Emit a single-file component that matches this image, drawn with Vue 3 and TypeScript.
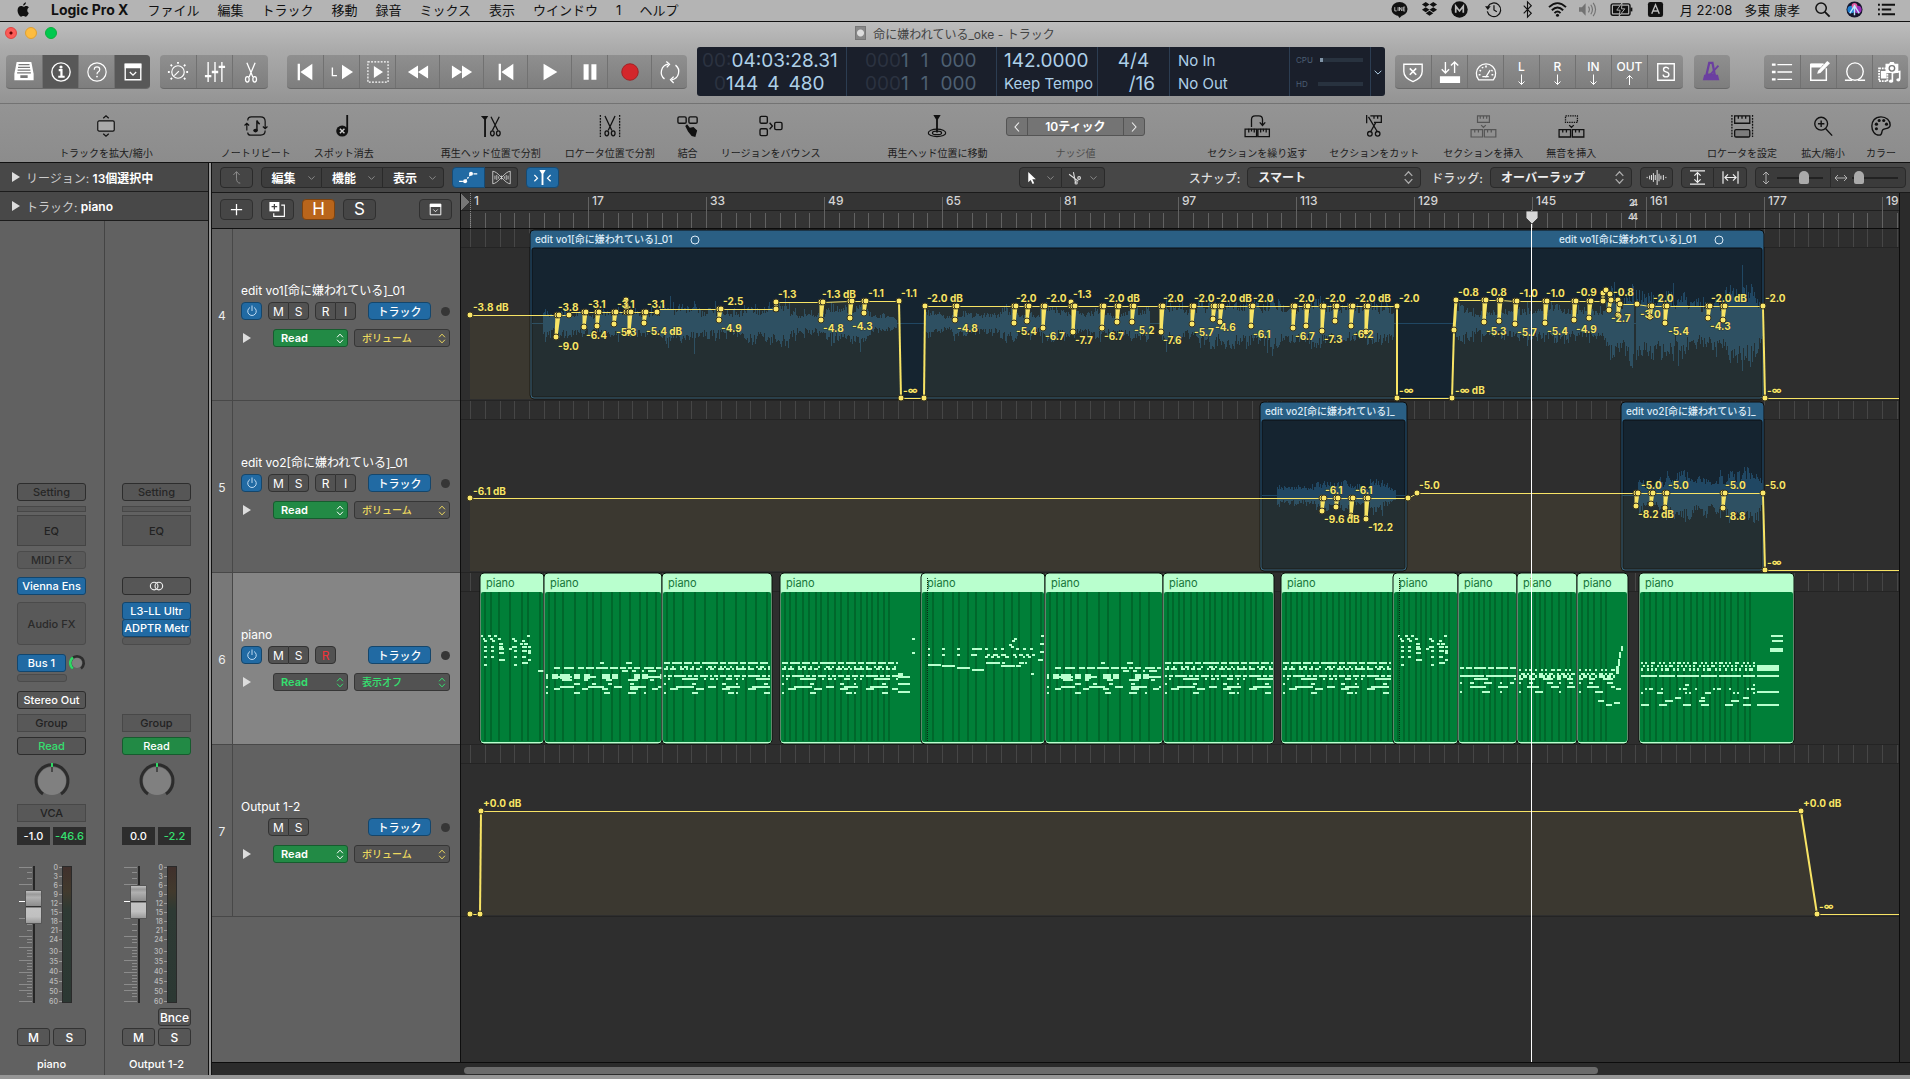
<script setup lang="ts">
import { ref } from 'vue'

type Pt = [number, number]
type Label = [number, number, string]

const icons: Record<string, string> = {
  apple: '<path fill="currentColor" d="M14.6 12.6c-.9 2.500-2.300 4-3.400 4-1 0-1.300-.6-2.400-.6s-1.500.6-2.400.6C4.800 16.600 2.700 13 2.700 9.900c0-3 1.900-4.500 3.700-4.500 1.100 0 2 .7 2.600.7.700 0 1.700-.8 3-.8.700 0 2 .3 2.700 1.500-2.400 1.500-2 4.800-.1 5.800zM11.600 1.200c.1 1.900-1.300 3.500-3 3.600-.2-1.700 1.400-3.400 3-3.600z"/>',
  line: '<ellipse cx="9" cy="8.500" rx="8.500" ry="7.500" fill="currentColor"/><path d="M7 15l2 3 3-3z" fill="currentColor"/><path d="M4 6.500v4h2M7.500 6.500v4M9 10.500v-4l2.500 4v-4M15 6.500h-2v4h2M13 8.500h2" fill="none" stroke="#bbb" stroke-width="1"/>',
  dropbox: '<path fill="currentColor" d="M5 1l4 2.700-4 2.700L1 3.700zM13 1l4 2.700-4 2.700-4-2.700zM5 6.600l4 2.700L5 12 1 9.300zM13 6.600l4 2.700-4 2.700-4-2.700zM5 12.900l4-2.600 4 2.600-4 2.700z"/>',
  m: '<circle cx="9" cy="9" r="8.700" fill="currentColor"/><path d="M5 12.500v-7l4 5 4-5v7" fill="none" stroke="#bbb" stroke-width="1.800"/>',
  time: '<g fill="none" stroke="currentColor" stroke-width="1.300"><path d="M3 6a7.200 7.200 0 1 1-.6 5"/><path d="M9.500 4.500V9.500l3 2"/></g><path d="M0 5.500h6L3 9.500z" fill="currentColor"/>',
  bt: '<path d="M5 5l8 8-4 4V1l4 4-8 8" fill="none" stroke="currentColor" stroke-width="1.200"/>',
  wifi: '<g fill="none" stroke="currentColor" stroke-width="2"><path d="M0 6.500q9-8.500 18 0M3 9.800q6-6 12 0M5.800 12.800q3.200-3.200 6.400 0"/></g><circle cx="9" cy="15" r="1.600" fill="currentColor"/>',
  vol: '<g opacity=".4"><path d="M0 6.500h3l4-4v13l-4-4H0z" fill="currentColor"/><path d="M10 6q2 3 0 6M12.500 4q3.500 5 0 10M15 2q5 7 0 14" fill="none" stroke="currentColor" stroke-width="1.200"/></g>',
  bat: '<rect x="-2" y="3" width="20" height="12" rx="2" fill="none" stroke="currentColor" stroke-width="1.500"/><rect x="0" y="5" width="16" height="8" fill="currentColor"/><path d="M19.500 7v4" stroke="currentColor" stroke-width="2"/><path d="M9.500 2L4 9.700h3.500L6.500 16l6-7.700H9z" fill="currentColor" stroke="#b4b4b4"/>',
  abc: '<rect x="1" y="1" width="16" height="16" rx="2.500" fill="currentColor"/><path d="M5 13.500L9 4l4 9.500M6.500 10.500h5" fill="none" stroke="#bbb" stroke-width="1.500"/>',
  search: '<circle cx="7.500" cy="7.500" r="5.500" fill="none" stroke="currentColor" stroke-width="1.600"/><path d="M11.500 11.500l5 5" stroke="currentColor" stroke-width="2"/>',
  siri: '<circle cx="9" cy="9" r="8.500" fill="#15152c"/><circle cx="5.500" cy="9" r="4" fill="#1f7fd0"/><circle cx="12.500" cy="9" r="4" fill="#9b2fb8"/><circle cx="9" cy="5" r="3" fill="#e0569d"/><path d="M4 13l5-8 5 8M9 4v11" stroke="#bfe8ff" fill="none" stroke-width="1.500"/>',
  list: '<path d="M4 4h14M4 9h10M4 14h14" stroke="currentColor" stroke-width="2"/><path d="M0 4h2M0 9h2M0 14h2" stroke="currentColor" stroke-width="2"/>',
  library: '<path d="M4 1h16l2.500 13v7h-21v-7z" fill="#fff"/><path d="M6 4h12M5.500 7h13M5 10h14M4.500 13h15" stroke="#777" stroke-width="1.500"/><path d="M8 15.500h8v3H8z" fill="#777"/>',
  info: '<g fill="none" stroke="#fff" stroke-width="1.500"><circle cx="12" cy="12" r="10"/><path d="M9.500 10h3v7M9 17.200h7" stroke-width="2.400"/></g><circle cx="12" cy="6.500" r="1.700" fill="#fff"/>',
  help: '<g fill="none" stroke="#fff" stroke-width="1.300"><circle cx="12" cy="12" r="10"/><path d="M9 9.500q0-3 3-3t3 2.800q0 1.700-1.800 2.700Q12 12.700 12 14.500"/></g><circle cx="12" cy="17" r="1" fill="#fff"/>',
  drop: '<path d="M3.500 3.500h17v17h-17z" fill="none" stroke="#fff" stroke-width="1.500"/><path d="M3 3h18v5H3z" fill="#fff"/><path d="M8.500 12l3.500 3.500 3.500-3.500" fill="none" stroke="#fff" stroke-width="1.300"/>',
  knob: '<g stroke="#fff" fill="none"><circle cx="12" cy="12" r="6.800" stroke-width="1.300"/><path d="M8 16l5-5" stroke-width="1.300"/><path d="M12 1v2M1 12h2M21 12h2M4 4l1.500 1.500M20 4l-1.500 1.500M4 20l1.500-1.500M20 20l-1.500-1.500" stroke-width="2"/></g>',
  mixer: '<g stroke="#fff" fill="none" stroke-width="1.500"><path d="M4.500 1v22M12 1v22M19.500 1v22"/><path d="M1 16.500h7M8.500 12h7M16 6.500h7" stroke-width="2.500"/></g>',
  scissors: '<g stroke="currentColor" fill="none" stroke-width="1.400"><path d="M7.500 2l6.500 15.500M16.500 2L10 17.500"/><ellipse cx="8" cy="20" rx="2" ry="3"/><ellipse cx="16" cy="20" rx="2" ry="3"/></g>',
  start: '<path d="M4 3h2.500v18H4zM20 3v18L7 12z" fill="#fff"/>',
  lplay: '<path d="M1.500 7v9h5" stroke="#fff" stroke-width="1.500" fill="none"/><path d="M12 4v16l12-8z" fill="#fff"/>',
  box: '<path d="M1 1h22v22H1z" fill="none" stroke="#fff" stroke-width="1.300" stroke-dasharray="2 1.500"/><path d="M7.500 5.500v13l10-6.500z" fill="#fff"/>',
  rew: '<path d="M12 5v14L1 12zM23 5v14l-11-7z" fill="#fff"/>',
  fwd: '<path d="M1 5v14l11-7zM12 5v14l11-7z" fill="#fff"/>',
  play: '<path d="M5 3v18l15-9z" fill="#fff"/>',
  pause: '<path d="M5 3.500h5.500v17H5zM13.500 3.500H19v17h-5.500z" fill="#fff"/>',
  rec: '<circle cx="12" cy="12" r="9" fill="#d3262b" stroke="#a01c20"/>',
  cycle: '<g fill="none" stroke="#fff" stroke-width="1.400"><path d="M6 19.500A9 9 0 0 1 10 3.500M18 4.500A9 9 0 0 1 14 20.500"/><path d="M8 .5l3.500 3L8.500 7M16 17l-3.500 3.500L16 24"/></g>',
  shield: '<g fill="none" stroke="#fff" stroke-width="1.500"><path d="M2 3.500h20v8q0 7-10 11-10-4-10-11z"/><path d="M8.500 8l7 7M15.500 8l-7 7" stroke-width="1.800"/></g>',
  replace: '<g fill="none" stroke="#fff" stroke-width="1.500"><path d="M7 1v12M3 9l4 4 4-4M17 13V1M13 5l4-4 4 4"/></g><path d="M1 16.500h22V24H1z" fill="#fff"/>',
  gauge: '<g fill="none" stroke="#fff" stroke-width="1.400"><path d="M4 20.500a10.500 10.500 0 1 1 16 0z"/><path d="M11.500 18l5-8M8 17h7"/><path d="M12 5v2M5 10l1.500 1M4 15h2M19 10l-1 1M18 15h2M8 6.500l.5 1.500" stroke-width="1.800"/></g>',
  down: '<path d="M12 1v20M6 15l6 6 6-6" fill="none" stroke="#fff" stroke-width="2"/>',
  up: '<path d="M12 22V3M6 9l6-6 6 6" fill="none" stroke="#fff" stroke-width="2"/>',
  solo: '<path d="M3 3h18v18H3z" fill="none" stroke="#fff" stroke-width="1.500"/><path d="M15 9q-.5-2.200-3-2.200-2.700 0-2.700 2.400 0 2 2.700 2.600 3.200.7 3.200 2.900 0 2.600-3.200 2.600-2.900 0-3.200-2.500" fill="none" stroke="#fff" stroke-width="1.500"/>',
  metro: '<path d="M9 2h3.500l2.500 13H6z" fill="none" stroke="#6b3fa0" stroke-width="2.500"/><path d="M3.500 15h15l1.500 6H2z" fill="#6b3fa0"/><path d="M10 15l9-10" stroke="#6b3fa0" stroke-width="2"/>',
  events: '<path d="M7 4h16M7 12h16M7 20h16" stroke="#fff" stroke-width="1.500"/><path d="M1 4h4M1 12h4M1 20h4" stroke="#fff" stroke-width="2.500"/>',
  note: '<path d="M3 3.500h14M20 8v13H3V3" fill="none" stroke="#fff" stroke-width="1.600"/><path d="M3 3h14l-3 4H3z" fill="#fff"/><path d="M10 14l1-3.500L21 0l3 2.500-10.500 10.500z" fill="#fff"/>',
  loop: '<g fill="none" stroke="#fff" stroke-width="1.500"><ellipse cx="12" cy="11.500" rx="9" ry="9.500"/><path d="M1 21h8M15 21h8"/></g>',
  media: '<path d="M-1 8h9v14h-9z" fill="none" stroke="#fff" stroke-width="2" stroke-dasharray="2 1"/><path d="M1 11h6v8H1z" fill="#fff"/><path d="M6 3h4l1-2h4l1 2h4v10H6z" fill="#fff"/><circle cx="13" cy="8" r="3" fill="none" stroke="#777" stroke-width="1.500"/><path d="M13.500 22v-9l8-1.500V20" fill="none" stroke="#fff" stroke-width="1.800"/><ellipse cx="12" cy="22" rx="2.200" ry="1.800" fill="#fff"/><ellipse cx="20" cy="20.500" rx="2.200" ry="1.800" fill="#fff"/>',
  tZoom: '<g fill="none" stroke="#111" stroke-width="1.300"><rect x="3" y="6.500" width="18" height="11" rx="1.500" fill="#aaa"/><path d="M9 3.500L12 .8l3 2.700M9 20.500l3 2.700 3-2.700"/></g>',
  tRepeat: '<g fill="none" stroke="#111" stroke-width="1.300"><path d="M2 17V9M-.5 11.500L2 9l2.500 2.500M22 7v8M19.500 12.500L22 15l2.500-2.500M3 19q0 3 3 3h12M3 6q0-4 4-4h10q5 0 5 5M22 17q0 5-5 5"/><path d="M13 17V6q.5 2 3 4" stroke-width="1.600"/></g><ellipse cx="11.500" cy="17" rx="2.500" ry="2" fill="#111"/>',
  tSpot: '<ellipse cx="10" cy="17.500" rx="6.500" ry="6" fill="#111"/><path d="M15.500 17V0" stroke="#111" stroke-width="2"/><path d="M7.500 15l5 5M12.500 15l-5 5" stroke="#ccc" stroke-width="1.600"/>',
  tSplit: '<path d="M1 1h8L6.500 5v19h-2V5z" fill="#111"/><g stroke="#111" fill="none" stroke-width="1.400"><path d="M12 2l7.500 15M21 2l-7.500 15"/><ellipse cx="13.500" cy="20" rx="2" ry="2.700"/><ellipse cx="20" cy="20" rx="2" ry="2.700"/></g>',
  tLoc: '<g stroke="#111" fill="none" stroke-width="1.400"><path d="M1.500 0v24M22.500 0v24" stroke-dasharray="2 1.200"/><path d="M6.500 1l7.500 16M17.500 1L10 17"/><ellipse cx="8.500" cy="20" rx="2" ry="2.700"/><ellipse cx="15.500" cy="20" rx="2" ry="2.700"/></g>',
  tJoin: '<g stroke="#111" fill="none" stroke-width="1.500"><rect x="1" y="2" width="9" height="7" rx="1.500"/><rect x="13" y="2" width="9" height="7" rx="1.500"/></g><path d="M9 12l2-2 3 4 4-1 4 4-2 7-4-1-4-5z" fill="#111"/>',
  tBounce: '<g stroke="#111" fill="none" stroke-width="1.500"><rect x="0" y="1.500" width="8" height="7.500" rx="1.500"/><rect x="0" y="15" width="8" height="7.500" rx="1.500"/><rect x="16" y="8" width="8" height="8" rx="1.500"/><path d="M10.500 8.500l3 3.500-3 3.500"/></g>',
  tMove: '<path d="M8 0h8l-3 5v14h-2V5z" fill="#111"/><g stroke="#111" fill="none" stroke-width="1.300"><ellipse cx="12" cy="19.500" rx="9.500" ry="4"/><ellipse cx="12" cy="19.500" rx="5" ry="2"/></g>',
  tLoop: '<g stroke="#111" fill="none" stroke-width="1.400"><path d="M6 13V5q0-4 4-4h4q4 0 4 4v6M15 8l3 3.500L21 8"/><path d="M-1 15.500h12.500v8H-1zM13 15.500h12.500v8H13z"/><path d="M3 15v4M6 15v3M9 15v4M16 15v4M19 15v3M22 15v4"/></g>',
  tCut: '<g stroke="#111" fill="none" stroke-width="1.400"><path d="M4 0v9M8 1h12v7h-8M12 1v3M16 1v3"/><path d="M6 2l9.500 16M14 8L8.500 18"/><circle cx="7.500" cy="20.500" r="2.500"/><circle cx="16" cy="20.500" r="2.500"/></g>',
  tIns: '<g stroke="#555" fill="none" stroke-width="1.300"><path d="M6 1h13v7H6zM9 1v3M12.500 1v3M16 1v3M10 11l2.500 2.500L15 11M-1 16h12.500v8H-1zM13.500 16H26v8H13.500zM3 16v3M7 16v3M17 16v3M21 16v3"/></g>',
  tSil: '<g stroke="#111" fill="none" stroke-width="1.400"><path d="M6 1h13v7H6z" stroke-dasharray="1.500 1"/><path d="M10 11l2.500 2.500L15 11M-1 16h12.500v8H-1zM13.500 16H26v8H13.500zM3 16v3M7 16v3M17 16v3M21 16v3"/></g>',
  tSet: '<g stroke="#111" fill="none" stroke-width="1.400"><path d="M1 0v24M23.500 0v24" stroke-dasharray="2 1.200"/><path d="M4 1h16.500v8H4zM8 1v3M12 1v3M16 1v3"/><rect x="4" y="16" width="16.500" height="8" rx="1.500" fill="#7c7c7c"/></g>',
  tMag: '<g stroke="#111" fill="none" stroke-width="1.500"><circle cx="10" cy="9.500" r="7"/><path d="M6.500 9.500h7M10 6v7M15 15l7 7.500" /></g>',
  tPal: '<path d="M12 2C5 2 2 7 2 12s3 10 8 10c4 0 2-4 4-6s8 0 8-5-4-9-10-9z" fill="none" stroke="#111" stroke-width="1.500"/><g fill="#111"><circle cx="7" cy="10" r="1.800"/><circle cx="10" cy="6" r="1.700"/><circle cx="15" cy="6" r="1.700"/><circle cx="18" cy="10" r="1.700"/><circle cx="7" cy="15" r="1.700"/></g>',
  back: '<path d="M18 21q-6 0-6-8V3M7 8l5-5.500L17 8" fill="none" stroke="#8a8a8a" stroke-width="1.600"/>',
  auto: '<g fill="#fff"><path d="M-3 17h6v2h-6zM20 5h6v2h-6z"/><circle cx="6.500" cy="18" r="3.200"/><circle cx="16" cy="6" r="3.200"/></g><path d="M7 17.500l9-11" stroke="#fff" stroke-width="2" stroke-dasharray="3 2"/>',
  flex: '<g fill="none" stroke="#ddd" stroke-width="1.300"><path d="M-2 2q5 0 14 10 9 10 14 10V2q-5 0-14 10-9 10-14 10z"/><path d="M1.500 9v6M4.500 8v8M7.500 10v4M16.500 10v4M19.500 8v8M22.500 9v6M12 9v6"/></g>',
  catch: '<path d="M7 0h10l-3.500 6v18h-3V6z" fill="#fff"/><path d="M-1 8l5 5-5 5M25 8l-5 5 5 5" fill="none" stroke="#fff" stroke-width="1.900"/>',
  chev: '<path d="M4 9l8 8 8-8" fill="none" stroke="currentColor" stroke-width="2.200"/>',
  left: '<path d="M16 3L8 12l8 9" fill="none" stroke="#eee" stroke-width="2.200"/>',
  right: '<path d="M8 3l8 9-8 9" fill="none" stroke="#eee" stroke-width="2.200"/>',
  updown: '<path d="M5 9l7-7.500L19 9M5 15l7 7.500 7-7.500" fill="none" stroke="currentColor" stroke-width="2.400"/>',
  plus: '<path d="M12 3v18M3 12h18" stroke="#fff" stroke-width="2"/>',
  dup: '<path d="M-1 0h16v15H-1z" fill="#fff"/><path d="M7 3v9M2.500 7.500h9" stroke="#444" stroke-width="2"/><path d="M18 5h5v18H6v-5" fill="none" stroke="#fff" stroke-width="1.800"/>',
  pointer: '<path d="M6 1v19l4.500-4.500L14 23l3-1.500-3.500-7H20z" fill="#fff"/>',
  cut2: '<g fill="none" stroke="#ddd" stroke-width="2"><path d="M2 5l17 13M10 1l4 20"/><circle cx="20.500" cy="12" r="2.500"/><circle cx="15" cy="21" r="2"/></g>',
  wave: '<path d="M-3 11v2M1 9v6M4 8v8M7 5v14M10 8v8M13 0v24M16 6v12M19 9v6M23 8v8M27 11v2" stroke="#eee" stroke-width="1.500"/>',
  vfit: '<path d="M0 1.500h24M0 22.500h24M12 4v16M7 9l5-5 5 5M7 15l5 5 5-5" fill="none" stroke="#eee" stroke-width="1.900"/>',
  hfit: '<path d="M0 2v20M24 2v20M3 12h18M8 7l-5 5 5 5M16 7l5 5-5 5" fill="none" stroke="#eee" stroke-width="1.900"/>',
  vzoom: '<path d="M12 0v24M6 6l6-6 6 6M6 18l6 6 6-6" fill="none" stroke="#bbb" stroke-width="1.800"/>',
  hzoom: '<path d="M0 12h24M6 6l-6 6 6 6M18 6l6 6-6 6" fill="none" stroke="#bbb" stroke-width="1.800"/>',
  power: '<path d="M8 5a8.500 8.500 0 1 0 8 0M12 1v11" fill="none" stroke="#cfe6fa" stroke-width="1.800"/>',
  stereo: '<g fill="none" stroke="#eee" stroke-width="2"><circle cx="8" cy="12" r="6.500"/><circle cx="16" cy="12" r="6.500"/></g>',
}

const menus = ['ファイル', '編集', 'トラック', '移動', '録音', 'ミックス', '表示', 'ウインドウ', '1', 'ヘルプ']
const trayIcons: [string, boolean][] = [['line', false], ['dropbox', false], ['m', false], ['time', true], ['bt', false], ['wifi', false], ['vol', false], ['bat', true], ['abc', false]]

const viewBtns: [string, string, boolean][] = [['library', 'ライブラリ', false], ['info', 'インスペクタ', true], ['help', 'クイックヘルプ', false], ['drop', 'ツールバー', true]]
const editBtns: [string, string][] = [['knob', 'Smart Control'], ['mixer', 'ミキサー'], ['scissors', 'エディタ']]
const transport: [string, string, boolean][] = [['start', '先頭へ', false], ['lplay', '左ロケータから再生', false], ['box', '選択範囲を再生', false], ['rew', '巻き戻し', true], ['fwd', '早送り', true], ['start', '停止', true], ['play', '再生', true], ['pause', '一時停止', false], ['rec', '録音', true], ['cycle', 'サイクル', false]]
const modeBtns: [string, string, string][] = [['shield', '', '低レイテンシー'], ['replace', '', '置き換え'], ['gauge', '', 'チューナー'], ['down', 'L', '左ロケータ'], ['down', 'R', '右ロケータ'], ['down', 'IN', 'パンチイン'], ['up', 'OUT', 'パンチアウト'], ['solo', '', 'ソロ']]
const rightBtns: [string, string][] = [['events', 'リスト'], ['note', 'ノートパッド'], ['loop', 'ループ'], ['media', 'ブラウザ']]

/* toolbar tools: leading space weight, icon, label */
const tools: [number, string, string][] = [
  [77, 'tZoom', 'トラックを拡大/縮小'], [92, 'tRepeat', 'ノートリピート'], [30, 'tSpot', 'スポット消去'],
  [89, 'tSplit', '再生ヘッド位置で分割'], [61, 'tLoc', 'ロケータ位置で分割'], [20, 'tJoin', '結合'],
  [25, 'tBounce', 'リージョンをバウンス'], [109, 'tMove', '再生ヘッド位置に移動'], [80, 'nudge', 'ナッジ値'],
  [124, 'tLoop', 'セクションを繰り返す'], [59, 'tCut', 'セクションをカット'], [51, 'tIns', 'セクションを挿入'],
  [30, 'tSil', '無音を挿入'], [113, 'tSet', 'ロケータを設定'], [23, 'tMag', '拡大/縮小'], [0, 'tPal', 'カラー'],
]

const strips = [
  { name: 'piano', midi: true, vol: '-1.0', peak: '-46.6', fader: 79, on: false },
  { name: 'Output 1-2', midi: false, vol: '0.0', peak: '-2.2', fader: 84, on: true },
]
const scaleMarks: [string, number][] = [['0', 1], ['3', 10], ['6', 19], ['9', 28], ['12', 37], ['15', 46], ['18', 55], ['21', 64], ['24', 73], ['30', 85], ['35', 95], ['40', 105], ['45', 115], ['50', 125], ['60', 135]]
const faderTicks: [number, number][] = [[1, 13], [6, 5], [12, 5], [18, 13], [24, 5], [29, 5], [35, 13], [41, 5], [47, 5], [52, 13], [58, 5], [64, 5], [70, 13], [73, 5], [76, 5], [81, 13], [84, 5], [87, 5], [90, 5], [94, 13], [97, 5], [100, 5], [103, 5], [106, 13], [109, 5], [112, 5], [115, 5], [118, 13], [121, 5], [124, 13], [127, 5], [130, 5], [135, 13]]

const tracks = [
  { n: 4, name: 'edit vo1[命に嫌われている]_01', power: true, rec: 'RI', auto: true, param: 'ボリューム' },
  { n: 5, name: 'edit vo2[命に嫌われている]_01', power: true, rec: 'RI', auto: true, param: 'ボリューム' },
  { n: 6, name: 'piano', power: true, rec: 'R', auto: false, param: '表示オフ' },
  { n: 7, name: 'Output 1-2', power: false, rec: '', auto: true, param: 'ボリューム' },
]
const zoomV = ref(60)
const zoomH = ref(6)

/* timeline: coordinates share the window's origin; the canvas starts at X0, Y0 */
const X0 = 461
const Y0 = 229
const LANE = 172

const majors: [number, string][] = [[470, '1'], [588, '17'], [706, '33'], [824, '49'], [942, '65'], [1060, '81'], [1178, '97'], [1296, '113'], [1414, '129'], [1532, '145'], [1646, '161'], [1764, '177'], [1882, '193']]
const ticks: number[] = []
for (const [m] of majors) for (let i = 0; i < 8; i++) {
  const x = Math.round(m + i * 14.75)
  if (x < 1899) ticks.push(x)
}

function seeded(seed: number) {
  let s = seed
  return () => { s = (s * 16807) % 2147483647; return s / 2147483647 }
}

function wave(cy: number, segs: [number, number, number, number][], seed: number) {
  const r = seeded(seed)
  let d = ''
  for (const [a, b, up0, up1] of segs) {
    let swell = 0.8
    for (let x = a; x < b; x++) {
      swell = Math.min(1, Math.max(0.5, swell + (r() - 0.5) * 0.25))
      const amp = (up0 + ((up1 - up0) * (x - a)) / (b - a)) * swell
      const spike = r() > 0.96 ? 1.5 : 1
      const u = Math.round(amp * (0.5 + 0.5 * r()) * spike)
      const l = Math.round(amp * (0.5 + 0.6 * r()) * spike)
      d += `M${x} ${cy - u}h1V${cy + l}h-1z`
    }
  }
  return d
}
const waves = [
  wave(323, [[543, 560, 24, 18], [560, 660, 15, 13], [660, 790, 24, 24], [790, 866, 19, 19], [866, 897, 22, 4], [926, 1000, 14, 11], [1000, 1040, 18, 18], [1040, 1150, 22, 19], [1162, 1250, 26, 24], [1250, 1320, 34, 36], [1320, 1394, 36, 34], [1456, 1480, 24, 10], [1480, 1540, 14, 18], [1540, 1606, 26, 26], [1606, 1634, 38, 42], [1636, 1763, 38, 40]], 77),
  wave(495, [[1277, 1300, 18, 13], [1300, 1370, 14, 17], [1370, 1396, 22, 5], [1638, 1665, 18, 22], [1665, 1720, 28, 20], [1720, 1763, 28, 30]], 23),
]

const audio = [
  { x: 530, end: 1764, y: 230, label: 'edit vo1[命に嫌われている]_01', ring: true, second: 1559 },
  { x: 1260, end: 1407, y: 402, label: 'edit vo2[命に嫌われている]_', ring: false, second: 0 },
  { x: 1621, end: 1764, y: 402, label: 'edit vo2[命に嫌われている]_', ring: false, second: 0 },
]

function dips(y: number, list: Pt[]): Pt[] {
  return list.flatMap(([x, b]) => [[x, y], [x, b], [x + 2, y]] as Pt[])
}
const line1: Pt[] = [
  [470, 315], [557, 315], [556, 337], [559, 315], [569, 315], [571, 312],
  ...dips(312, [[584, 327], [597, 326], [614, 324], [626, 300], [629, 332], [644, 323]]), [657, 312], [660, 309],
  ...dips(309, [[719, 320]]), [776, 309], [776, 302], ...dips(302, [[821, 320]]),
  ...dips(301, [[850, 318], [864, 313]]), [899, 301], [901, 398], [924, 398], [925, 306],
  ...dips(306, [[955, 320], [1014, 323], [1027, 321], [1043, 328], [1071, 302], [1073, 332], [1102, 328], [1117, 322], [1132, 322], [1161, 332], [1192, 324], [1213, 319], [1220, 322], [1251, 326], [1293, 328], [1306, 326], [1322, 331], [1335, 321], [1351, 326], [1366, 332]]),
  [1397, 306], [1397, 398], [1452, 398], [1454, 330], [1456, 300],
  ...dips(300, [[1484, 322], [1499, 321]]), ...dips(301, [[1515, 324], [1545, 323], [1574, 320], [1589, 318]]),
  [1603, 301], [1603, 293], [1606, 290], [1610, 294], [1609, 310], [1611, 300], [1618, 300], [1618, 315], [1620, 304], [1637, 304],
  ...dips(306, [[1650, 317], [1665, 323], [1708, 318], [1723, 320]]), [1763, 306], [1765, 398], [1899, 398],
]
const line2: Pt[] = [
  [470, 498], ...dips(498, [[1322, 511], [1336, 507], [1351, 516], [1366, 519]]), [1408, 498], [1417, 493],
  ...dips(493, [[1636, 506], [1651, 504], [1665, 508], [1723, 508]]), [1763, 493], [1765, 570], [1899, 570],
]
const line4: Pt[] = [[470, 914], [480, 914], [481, 811], [1801, 811], [1817, 914], [1899, 914]]
const lines = [{ pts: line1, base: 399 }, { pts: line2, base: 571 }, { pts: line4, base: 915 }]
const bends = [571, 660]
const poly = (p: Pt[]) => p.map(q => q.join(',')).join(' ')
const area = (p: Pt[], base: number) => `${p[0][0]},${base} ${poly(p)} 1899,${base}`
const flat = (p: Pt[]) => p.slice(1).map((q, i) => [p[i], q] as [Pt, Pt]).filter(([a, b]) => Math.abs(a[1] - b[1]) <= 5)
const steep = (p: Pt[]) => p.slice(1).map((q, i) => [p[i], q] as [Pt, Pt]).filter(([a, b]) => Math.abs(a[1] - b[1]) > 5)
const dots = (p: Pt[]) => p.filter(q => q[0] < 1899 && !bends.includes(q[0]))

const dB = '-2.0 dB'
const labels: Label[] = [
  [473, 307, '-3.8 dB'], [558, 307, '-3.8'], [558, 346, '-9.0'], [588, 304, '-3.1'], [586, 335, '-6.4'], [617, 304, '-3.1'], [616, 332, '-5.3'],
  [647, 304, '-3.1'], [646, 331, '-5.4 dB'], [723, 301, '-2.5'], [721, 328, '-4.9'], [778, 294, '-1.3'], [822, 294, '-1.3 dB'], [823, 328, '-4.8'],
  [868, 293, '-1.1'], [852, 326, '-4.3'], [901, 293, '-1.1'], [903, 390, '-∞'], [927, 298, dB], [957, 328, '-4.8'], [1016, 298, '-2.0'], [1016, 331, '-5.4'],
  [1046, 298, '-2.0'], [1045, 336, '-6.7'], [1073, 294, '-1.3'], [1075, 340, '-7.7'], [1104, 298, dB], [1104, 336, '-6.7'], [1134, 330, '-5.2'],
  [1163, 298, '-2.0'], [1163, 340, '-7.6'], [1194, 298, '-2.0'], [1194, 332, '-5.7'], [1216, 298, dB], [1215, 327, '-4.6'], [1253, 298, '-2.0'],
  [1253, 334, '-6.1'], [1294, 298, '-2.0'], [1295, 336, '-6.7'], [1325, 298, '-2.0'], [1324, 339, '-7.3'], [1355, 298, dB], [1353, 334, '-6.2'],
  [1399, 298, '-2.0'], [1399, 390, '-∞'], [1455, 390, '-∞ dB'], [1458, 292, '-0.8'], [1486, 292, '-0.8'], [1486, 331, '-5.3'], [1519, 293, '-1.0'],
  [1517, 332, '-5.7'], [1546, 293, '-1.0'], [1547, 331, '-5.4'], [1576, 292, '-0.9'], [1576, 329, '-4.9'], [1613, 292, '-0.8'], [1611, 318, '-2.7'],
  [1653, 298, '-2.0'], [1640, 314, '-3.0'], [1668, 331, '-5.4'], [1711, 298, dB], [1710, 326, '-4.3'], [1765, 298, '-2.0'], [1767, 390, '-∞'],
  [473, 491, '-6.1 dB'], [1325, 490, '-6.1'], [1355, 490, '-6.1'], [1324, 519, '-9.6 dB'], [1368, 527, '-12.2'], [1419, 485, '-5.0'],
  [1641, 485, '-5.0'], [1668, 485, '-5.0'], [1638, 514, '-8.2 dB'], [1725, 485, '-5.0'], [1725, 516, '-8.8'], [1765, 485, '-5.0'], [1767, 562, '-∞'],
  [483, 803, '+0.0 dB'], [1803, 803, '+0.0 dB'], [1819, 906, '-∞'],
]

/* MIDI phrases: [y, height, pattern]; each pattern character is two pixels */
type Row = [number, number, string]
const phrases: Record<string, Row[]> = {
  verse: [[662, 2, '...........................##...........###................'], [667, 2, '....###..#####..###.####.######.####.###.##.###..#####.###'], [670, 2, '......................................###..##...#..####....'], [674, 5, '#..###.#####..###..###......####.###........###.###......'], [676, 2, '....###.#####.......#####.......................#.########'], [679, 2, '........#####......##.........###'], [683, 2, '..............###......##......##.........##....'], [686, 2, '#......#######.......########.....####....#######'], [688, 2, '....###...........###.......###...........####...'], [692, 2, '#.............###............###.........####....']],
  chorus: [[662, 2, '###.#####.####.###.########.###.#####.'], [666, 2, '.#..#...#.##..#...#...##.#..#.#..#..#.'], [668, 2, '##.###..##.#.##.##...#.##..###.##.#.###'], [675, 2, '#.##.######.##.##.####.#.##.###.##.##'], [678, 2, '..#......########...#..##.#....###..#'], [683, 2, '#.............##.............##.....'], [686, 2, '......#########.......####.....#######'], [688, 2, '...####.........####......'], [692, 2, '#.............###...............###.']],
  outro: [[667, 2, '##.###.####'], [675, 2, '############.###########'], [678, 2, '.......#######......'], [682, 2, '#....##.....####....'], [686, 2, '.....########......#####'], [691, 2, '#..........####.....']],
  fast: [[669, 2, '#..#.#..#..#.#..##.#'], [673, 2, '.##.#.##..##.#.##..#'], [675, 3, '#.##.#..#.###.##.#.#'], [678, 2, '##...###....#####..'], [682, 2, '#....##.......###...'], [686, 2, '....######......####'], [691, 2, '#.......####........']],
  last: [[662, 2, '#.#..##..#.#..#.#.##.'], [665, 2, '.#.#.#..#.#.#.##..#.#'], [668, 3, '#..#.#.#..#.##..#.#..'], [675, 2, '########.########.###'], [684, 2, '......................##..........'], [688, 2, '..#.##....#......'], [692, 2, '#.......###...........#.'], [697, 2, '.................###..........##..'], [700, 2, '............####.............###.'], [704, 2, '####.....####........'] ],
}
/* sparse phrases: [y, pairs of offset and width] */
const sparse: Record<string, [number, string][]> = {
  intro: [[635, '0,2 7,3 13,3 46,3'], [638, '2,2 9,3 17,3 31,3'], [640, '3,3 11,3 33,3 41,3'], [643, '18,4 39,3 43,4'], [646, '3,3 10,3 18,4 31,5 41,5 47,3'], [648, '18,5 28,3'], [650, '3,3 10,3 33,3 41,5 47,3'], [652, '18,5 47,3'], [656, '3,3 10,3 33,3 41,4'], [659, '18,6 47,3'], [662, '41,6'], [664, '3,3 33,3']],
  bridge: [[635, '119,3'], [638, '92,3'], [640, '90,3'], [643, '118,4'], [644, '87,3'], [646, '89,3'], [648, '6,2 20,3 35,3 50,10 63,3 72,3 79,3 94,3 101,3 108,3'], [651, '118,4'], [654, '6,2 20,3 35,3 49,6 65,3 71,5 79,5 91,3 97,4 104,3 110,3'], [656, '63,3 69,3 75,3 83,4 93,2 101,2 106,3'], [659, '116,5'], [662, '64,14 80,3 97,5 103,2'], [664, '6,13'], [665, '20,13 79,14 94,5'], [667, '35,13'], [669, '50,12'], [673, '109,3']],
}
interface Midi { x: number; end: number; to: number; kind: string; overlap?: boolean }
const midi: Midi[] = [
  { x: 481, end: 544, to: 544, kind: 'intro' }, { x: 545, end: 662, to: 662, kind: 'verse' }, { x: 663, end: 772, to: 771, kind: 'chorus' },
  { x: 781, end: 926, to: 898, kind: 'chorus' }, { x: 922, end: 1045, to: 1045, kind: 'bridge', overlap: true }, { x: 1046, end: 1163, to: 1162, kind: 'verse' },
  { x: 1164, end: 1274, to: 1273, kind: 'chorus' }, { x: 1282, end: 1398, to: 1392, kind: 'chorus' }, { x: 1394, end: 1458, to: 1457, kind: 'intro', overlap: true },
  { x: 1459, end: 1517, to: 1516, kind: 'outro' }, { x: 1518, end: 1577, to: 1576, kind: 'fast' }, { x: 1578, end: 1628, to: 1616, kind: 'fast' },
  { x: 1640, end: 1794, to: 1756, kind: 'last' },
]
function notes(m: Midi) {
  let d = ''
  const lead = m.x === 1394 ? 4 : 0
  for (const [y, list] of sparse[m.kind] ?? []) {
    for (const pair of list.split(' ')) {
      const [x, w] = pair.split(',').map(Number)
      d += `M${m.x + lead + x} ${y}h${w}v2h${-w}z`
    }
  }
  for (const [y, h, p] of phrases[m.kind] ?? []) {
    for (let i = 0, x = m.x + 1; x < m.to - 1; i++, x += 2) {
      if (p[i % p.length] === '#') d += `M${x} ${y}h2v${h}h-2z`
    }
  }
  if (m.x === 481) d += 'M538 670h6v2h-6z'
  if (m.x === 781) d += 'M898 673h5v3h-5zM898 676h12v2h-12zM898 683h12v2h-12zM898 691h12v2h-12zM912 638h3v2h-3zM912 652h3v2h-3z'
  if (m.x === 1578) d += 'M1616 666h3v8h-3zM1618 659h2v7h-2zM1619 652h2v6h-2zM1621 646h2v5h-2zM1598 700h6v2h-6zM1606 704h6v2h-6zM1614 702h6v2h-6zM1616 688h5v2h-5z'
  if (m.x === 1640) d += 'M1757 665h22v6h-22zM1757 675h22v2h-22zM1757 691h22v2h-22zM1757 704h22v2h-22zM1771 635h12v2h-12zM1772 640h11v2h-11zM1770 648h13v4h-13z'
  return d
}
function stripes(m: Midi) {
  const r = seeded(m.x * 31)
  let d = ''
  const dense = m.x === 781 || m.x >= 1164
  for (let x = m.x + 3; x < m.to - 4; x += dense ? 5 + Math.floor(r() * 3) : 6 + Math.floor(r() * 7)) d += `M${x} 592h2v149h-2z`
  return d
}
</script>

<template>
  <div class="screen">
    <header class="menubar">
      <svg class="i18" viewBox="0 0 18 18" v-html="icons.apple"></svg>
      <b>Logic Pro X</b>
      <nav><a v-for="m in menus" :key="m" href="#">{{ m }}</a></nav>
      <div class="tray">
        <span v-for="[n, wide] in trayIcons" :key="n" class="slot" :class="{ wide }"><svg class="i18" viewBox="0 0 18 18" v-html="icons[n]"></svg></span>
        <time>月 22:08</time>
        <span class="user">多東 康孝</span>
        <svg class="i18" viewBox="0 0 18 18" v-html="icons.search"></svg>
        <svg class="i18" viewBox="0 0 18 18" v-html="icons.siri"></svg>
        <svg class="i18" viewBox="0 0 18 18" v-html="icons.list"></svg>
      </div>
    </header>

    <section class="head">
      <div class="titlebar">
        <span class="lights"><i class="red"></i><i class="amber"></i><i class="green"></i></span>
        <span class="doc"><i class="docicon"></i>命に嫌われている_oke - トラック</span>
      </div>
      <div class="controls">
        <div class="grp left1">
          <button v-for="[n, t, on] in viewBtns" :key="n" :aria-label="t" :class="{ on }"><svg class="i20" viewBox="0 0 24 24" v-html="icons[n]"></svg></button>
        </div>
        <div class="grp left2">
          <button v-for="[n, t] in editBtns" :key="n" :aria-label="t"><svg class="i20 white" viewBox="0 0 24 24" v-html="icons[n]"></svg></button>
        </div>
        <div class="grp left3">
          <button v-for="([n, t, wide], i) in transport" :key="i" :aria-label="t" :class="{ wide }"><svg class="i20" viewBox="0 0 24 24" v-html="icons[n]"></svg></button>
        </div>
        <div class="lcd">
          <div class="cell time"><p><s>00:</s>04:03:28.31</p><p class="pos"><span><s>0</s>144</span><span>4</span><span>480</span></p></div>
          <div class="cell loc"><p v-for="k in 2" :key="k"><span><s>000</s>1</span><span>1</span><span>000</span></p></div>
          <div class="cell tempo"><p>142.0000</p><p class="small">Keep Tempo</p></div>
          <div class="cell sig"><p>4/4</p><p class="r">/16</p></div>
          <div class="cell io"><p class="small">No In</p><p class="small">No Out</p></div>
          <div class="cell load"><p>CPU<i><b></b></i></p><p>HD<i></i></p></div>
          <button class="more" aria-label="表示モード"><svg viewBox="0 0 24 24" v-html="icons.chev"></svg></button>
        </div>
        <div class="grp modes">
          <button v-for="[n, t, l] in modeBtns" :key="l" :aria-label="l" :class="{ stack: t }"><span v-if="t">{{ t }}</span><svg :class="t ? 'i12' : 'i20'" viewBox="0 0 24 24" v-html="icons[n]"></svg></button>
        </div>
        <div class="grp click"><button aria-label="メトロノーム"><svg class="i20" viewBox="0 0 24 24" v-html="icons.metro"></svg></button></div>
        <div class="grp last">
          <button v-for="[n, t] in rightBtns" :key="n" :aria-label="t"><svg class="i20" viewBox="0 0 24 24" v-html="icons[n]"></svg></button>
        </div>
      </div>
    </section>

    <section class="tools">
      <template v-for="[s, n, t] in tools" :key="t">
        <span class="sp" :style="{ flexGrow: s }"></span>
        <div class="tool" :class="{ dim: n === 'nudge' }">
          <div v-if="n === 'nudge'" class="nudge">
            <button aria-label="戻る"><svg viewBox="0 0 24 24" v-html="icons.left"></svg></button><span>10ティック</span><button aria-label="進む"><svg viewBox="0 0 24 24" v-html="icons.right"></svg></button>
          </div>
          <svg v-else class="tico" viewBox="0 0 24 24" v-html="icons[n]"></svg>
          <span>{{ t }}</span>
        </div>
      </template>
    </section>

    <main class="work">
      <aside class="inspector">
        <div class="fold"><i class="tri"></i>リージョン: <b>13個選択中</b></div>
        <div class="fold"><i class="tri"></i>トラック: <b>piano</b></div>
        <div class="strips">
          <div v-for="s in strips" :key="s.name" class="strip">
            <button class="bx dark">Setting</button>
            <div class="bx thin"></div>
            <button class="bx eq">EQ</button>
            <div class="row18 g8"><button v-if="s.midi" class="bx faint">MIDI FX</button></div>
            <div class="row18 g7"><button v-if="s.midi" class="bx blue">Vienna Ens</button><button v-else class="bx" aria-label="ステレオ"><svg class="st" viewBox="0 0 24 24" v-html="icons.stereo"></svg></button></div>
            <div class="fx">
              <button v-if="s.midi" class="bx faint">Audio FX</button>
              <template v-else><button class="bx blue">L3-LL Ultr</button><button class="bx blue next">ADPTR Metr</button><div class="bx faint rest"></div></template>
            </div>
            <div class="row18 g2 bus"><template v-if="s.midi"><button class="bx blue">Bus 1</button><svg class="mini" viewBox="0 0 18 18"><circle cx="9" cy="9" r="5" fill="#808080" /><path d="M5 14.500A6.800 6.800 0 1 1 13 14.500" fill="none" stroke="#2c2c2c" stroke-width="2.600" /><path d="M5 14.500A6.800 6.800 0 0 1 5 3.500" fill="none" stroke="#2fd865" stroke-width="2.600" /></svg></template></div>
            <div class="sub"><div v-if="s.midi" class="bx faint"></div></div>
            <div class="row18 g5"><button v-if="s.midi" class="bx">Stereo Out</button></div>
            <button class="bx flat">Group</button>
            <button class="bx read" :class="{ lit: s.on }">Read</button>
            <svg class="pan" viewBox="0 0 36 34"><circle cx="18" cy="18" r="14" fill="#808080" /><path d="M9 31A16 16 0 1 1 27 31" fill="none" stroke="#2c2c2c" stroke-width="3" /><path d="M18 0v4" stroke="#2fd865" stroke-width="2" /><path d="M18 4v5" stroke="#111" stroke-width="1" /></svg>
            <div class="row18 g5"><button v-if="s.midi" class="bx flat">VCA</button></div>
            <div class="vals"><span>{{ s.vol }}</span><span class="pk">{{ s.peak }}</span></div>
            <div class="fader">
              <svg width="56" height="138" class="fsvg">
                <rect v-for="[y, w] in faderTicks" :key="y" :x="15 - w" :y="y" :width="w" height="1" :fill="y === 35 ? '#fff' : '#8c8c8c'" />
                <text v-for="[t, y] in scaleMarks" :key="t" x="41" :y="y + 3" text-anchor="end">{{ t }}</text>
                <rect v-for="[t, y] in scaleMarks" :key="'k' + t" x="42" :y="y" width="3" height="1" fill="#999" />
                <defs><linearGradient :id="'mt' + s.fader" x1="0" x2="0" y1="0" y2="1"><stop offset="0" stop-color="#40302c" /><stop offset=".18" stop-color="#423a2d" /><stop offset=".32" stop-color="#2e3a34" /><stop offset="1" stop-color="#2c3833" /></linearGradient></defs>
                <rect x="45" y="0" width="10" height="137" fill="#2a2a2a" /><rect x="46" y="1" width="8" height="135" :fill="`url(#mt${s.fader})`" />
              </svg>
              <input type="range" min="0" max="103" :value="s.fader" :aria-label="s.name + ' volume'">
            </div>
            <div class="row18 g2 bn"><button v-if="!s.midi" class="bx half big">Bnce</button></div>
            <div class="ms"><button class="bx half big">M</button><button class="bx half big">S</button></div>
            <div class="sname">{{ s.name }}</div>
          </div>
        </div>
      </aside>

      <section class="arrange">
        <div class="amenu">
          <button class="tb up" aria-label="上へ"><svg viewBox="0 0 24 24" v-html="icons.back"></svg></button>
          <div class="seg m1"><button v-for="t in ['編集', '機能', '表示']" :key="t" class="tb menu">{{ t }}<svg class="c" viewBox="0 0 24 24" v-html="icons.chev"></svg></button></div>
          <div class="seg m1"><button class="tb blueb" aria-label="オートメーション"><svg viewBox="0 0 24 24" v-html="icons.auto"></svg></button><button class="tb" aria-label="フレックス"><svg viewBox="0 0 24 24" v-html="icons.flex"></svg></button></div>
          <button class="tb blueb" aria-label="キャッチ"><svg viewBox="0 0 24 24" v-html="icons.catch"></svg></button>
          <span class="grow1"></span>
          <div class="seg"><button class="tb two" aria-label="ポインタツール"><svg viewBox="0 0 24 24" v-html="icons.pointer"></svg><svg class="c" viewBox="0 0 24 24" v-html="icons.chev"></svg></button><button class="tb two" aria-label="はさみツール"><svg viewBox="0 0 24 24" v-html="icons.cut2"></svg><svg class="c" viewBox="0 0 24 24" v-html="icons.chev"></svg></button></div>
          <span class="grow2"></span>
          <label for="snap">スナップ:</label>
          <span class="pick snap"><select id="snap"><option>スマート</option></select><svg viewBox="0 0 24 24" v-html="icons.updown"></svg></span>
          <label for="drag">ドラッグ:</label>
          <span class="pick drag"><select id="drag"><option>オーバーラップ</option></select><svg viewBox="0 0 24 24" v-html="icons.updown"></svg></span>
          <button class="tb m1" aria-label="波形ズーム"><svg viewBox="0 0 24 24" v-html="icons.wave"></svg></button>
          <div class="seg m1"><button class="tb" aria-label="縦に合わせる"><svg viewBox="0 0 24 24" v-html="icons.vfit"></svg></button><button class="tb" aria-label="横に合わせる"><svg viewBox="0 0 24 24" v-html="icons.hfit"></svg></button></div>
          <div class="zooms">
            <span><svg viewBox="0 0 24 24" v-html="icons.vzoom"></svg><input v-model="zoomV" type="range" aria-label="縦ズーム"></span>
            <span><svg viewBox="0 0 24 24" v-html="icons.hzoom"></svg><input v-model="zoomH" type="range" aria-label="横ズーム"></span>
          </div>
        </div>

        <div class="body">
          <div class="heads">
            <div class="hbar">
              <button class="tb" aria-label="追加"><svg viewBox="0 0 24 24" v-html="icons.plus"></svg></button>
              <button class="tb" aria-label="複製"><svg viewBox="0 0 24 24" v-html="icons.dup"></svg></button>
              <button class="tb letter orange">H</button>
              <button class="tb letter">S</button>
              <button class="tb end" aria-label="ヘッダ設定"><svg viewBox="0 0 24 24" v-html="icons.drop"></svg></button>
            </div>
            <div v-for="t in tracks" :key="t.n" class="track" :class="{ sel: t.n === 6 }">
              <div class="num">{{ t.n }}</div>
              <div class="info">
                <div class="tname">{{ t.name }}</div>
                <div class="trow">
                  <button v-if="t.power" class="sm pw" aria-label="オン"><svg viewBox="0 0 24 24" v-html="icons.power"></svg></button><span v-else class="pwgap"></span>
                  <span class="pair"><button class="sm">M</button><button class="sm">S</button></span>
                  <span v-if="t.rec" class="pair" :class="{ armed: t.rec === 'R' }"><button v-for="c in t.rec" :key="c" class="sm">{{ c }}</button></span>
                  <button class="sm trk">トラック</button><i class="led"></i>
                </div>
                <div class="trow two">
                  <i class="tri"></i>
                  <span class="sel1" :class="{ lit: t.auto }"><select :aria-label="t.name + ' mode'"><option>Read</option></select><svg viewBox="0 0 24 24" v-html="icons.updown"></svg></span>
                  <span class="sel1 par" :class="{ yel: t.auto }"><select :aria-label="t.name + ' parameter'"><option>{{ t.param }}</option></select><svg viewBox="0 0 24 24" v-html="icons.updown"></svg></span>
                </div>
              </div>
            </div>
          </div>

          <div class="timeline">
            <svg class="ruler" width="100%" height="36" aria-label="ruler">
              <g :transform="`translate(${-X0} -193)`" shape-rendering="crispEdges">
                <rect x="461" y="210" width="2200" height="1" fill="#1f1f1f" />
                <rect v-for="x in ticks" :key="x" :x="x" y="213" width="1" height="15" fill="#626262" />
                <rect v-for="[x] in majors.slice(1)" :key="x" :x="x" y="197" width="1" height="31" fill="#626262" />
                <path d="M470.500 193v36" stroke="#888" stroke-dasharray="1 1" />
                <path d="M461 194l8 8-8 8z" fill="#777" />
              </g>
              <g :transform="`translate(${-X0} -193)`" class="rtext">
                <text v-for="[x, t] in majors" :key="t" :x="x + 4" y="205">{{ t }}</text>
                <text x="1629" y="206" class="sig">2</text><text x="1632" y="206" class="sig">4</text>
                <text x="1628" y="220" class="sig">4</text><text x="1632" y="220" class="sig">4</text>
              </g>
            </svg>
            <svg class="lanes" width="100%" height="833" aria-label="regions">
              <g :transform="`translate(${-X0} ${-Y0})`">
                <g shape-rendering="crispEdges">
                  <template v-for="k in 4" :key="k">
                    <rect v-for="x in ticks" :key="x" :x="x" :y="Y0 + (k - 1) * LANE" width="1" height="18" fill="#464646" />
                    <rect x="461" :y="Y0 + (k - 1) * LANE + 18" width="1438" height="1" fill="#242424" />
                    <rect x="461" :y="Y0 + k * LANE - 1" width="1438" height="1" fill="#242424" />
                  </template>
                </g>
                <g v-for="a in audio" :key="a.x">
                  <rect :x="a.x" :y="a.y" :width="a.end - a.x" height="169" rx="4" fill="#2a5f84" stroke="#0c0c0c" />
                  <rect :x="a.x + 2" :y="a.y + 18" :width="a.end - a.x - 4" height="149" rx="2" fill="#152430" stroke="#0c0f12" />
                  <text :x="a.x + 5" :y="a.y + 13" class="rlabel">{{ a.label }}</text>
                  <circle v-if="a.ring" :cx="695" :cy="a.y + 10" r="4" fill="none" stroke="#dcebf7" />
                  <template v-if="a.second"><text :x="a.second" :y="a.y + 13" class="rlabel">{{ a.label }}</text><circle :cx="1719" :cy="a.y + 10" r="4" fill="none" stroke="#dcebf7" /></template>
                </g>
                <g fill="#204763" shape-rendering="crispEdges">
                  <rect x="532" y="323" width="1231" height="1" /><rect x="1262" y="495" width="143" height="1" /><rect x="1622" y="495" width="141" height="1" />
                  <path v-for="(w, i) in waves" :key="i" :d="w" />
                </g>
                <g v-for="(l, i) in lines" :key="i">
                  <polygon :points="area(l.pts, l.base)" fill="rgba(255,215,85,.065)" />
                  <line v-for="([a, b], k) in flat(l.pts)" :key="'f' + k" :x1="a[0]" :y1="a[1] + .5" :x2="b[0]" :y2="b[1] + .5" stroke="#f8e465" stroke-width="1" />
                  <line v-for="([a, b], k) in steep(l.pts)" :key="k" :x1="a[0]" :y1="a[1]" :x2="b[0]" :y2="b[1]" stroke="#f8e465" :stroke-width="Math.abs(a[1] - b[1]) > 60 ? 2 : 3" />
                  <circle v-for="(p, k) in dots(l.pts)" :key="'d' + k" :cx="p[0]" :cy="p[1]" r="3" fill="#fbe76a" stroke="#3a3620" stroke-width="1" />
                </g>
                <text v-for="([x, y, t], i) in labels" :key="i" :x="x" :y="y + 4" class="alabel">{{ t }}</text>
                <g v-for="m in midi" :key="m.x">
                  <rect :x="m.x - 1" y="573" :width="m.end - m.x + 1" height="171" rx="4" fill="#b9ffce" stroke="#08100a" stroke-width="1" />
                  <rect :x="m.x" y="592" :width="m.end - m.x - 1" height="150" rx="2" fill="#007f38" />
                  <path :d="stripes(m)" fill="#00672b" />
                  <path :d="notes(m)" fill="#b9ffce" shape-rendering="crispEdges" />
                  <text :x="m.x + 5" y="587" class="mlabel">piano</text>
                  <path v-if="m.overlap" :d="`M${m.x + 5}.500 578v164`" stroke="#0b2a16" stroke-dasharray="1 1" />
                </g>
              </g>
            </svg>
            <div class="playhead"><svg width="14" height="14" viewBox="0 0 14 14"><path d="M1 1h12v7l-6 6-6-6z" fill="#d8d8d8" stroke="#333" stroke-width=".8" /></svg></div>
          </div>
          <div class="vbar"></div>
        </div>
        <div class="hscroll"><i></i></div>
      </section>
    </main>
  </div>
</template>

<style>
html, body { background: #8f8f8f; }
body { overflow: hidden; }
</style>

<style scoped>
.screen { font-family: Inter, "Noto Sans CJK JP", sans-serif; font-size: 12px; color: #eee; display: flex; flex-direction: column; min-height: 100vh; background: #969696; box-sizing: border-box; padding-bottom: 4px; }
.screen * { box-sizing: border-box; }
button { font: inherit; color: inherit; border: 0; padding: 0; margin: 0; background: none; display: flex; align-items: center; justify-content: center; white-space: nowrap; }
select { font: inherit; color: inherit; appearance: none; border: 0; background: none; padding: 0; margin: 0; width: 100%; }
svg { display: block; overflow: visible; flex: none; }
p { margin: 0; }
.i18 { width: 17px; height: 17px; }
.i20 { width: 22px; height: 22px; }
.i12 { width: 13px; height: 12px; }
.white { color: #fff; }

.menubar { height: 22px; background: #b4b4b4; border-bottom: 1px solid #111; color: #111; display: flex; align-items: center; padding: 0 15px 2px 15px; font-size: 13px; line-height: 18px; }
.menubar b { font-size: 14px; font-weight: 700; margin: 0 19px; white-space: nowrap; }
nav { display: flex; gap: 18px; }
nav a { color: #111; text-decoration: none; white-space: nowrap; }
.tray { margin-left: auto; display: flex; align-items: center; white-space: nowrap; }
.slot { width: 30px; display: flex; justify-content: center; }
.slot.wide { width: 38px; }
.tray time { margin: 0 12px 0 9px; }
.user { margin-right: 14px; }
.tray > svg { margin-left: 15px; }
.tray > svg:first-of-type { margin-left: 0; }

.head { height: 82px; background: linear-gradient(#bdbdbd, #aaa 35%, #949494); border-bottom: 1px solid #737373; }
.titlebar { height: 25px; position: relative; display: flex; align-items: center; justify-content: center; color: #444; font-size: 12px; padding-bottom: 3px; }
.lights { position: absolute; left: 5px; top: 5px; display: flex; gap: 8px; }
.lights i { width: 12px; height: 12px; border-radius: 50%; background: #fc5b57; border: 1px solid #e2443f; }
.lights .red { background: radial-gradient(circle, #600 0 1px, #fc5b57 2px); }
.lights .amber { background: #fdbc40; border-color: #dfa032; }
.lights .green { background: #00c94f; border-color: #0fae3c; }
.doc { display: flex; align-items: center; gap: 7px; }
.docicon { width: 11px; height: 14px; border: 1px solid #777; background: radial-gradient(circle, #ddd 3px, #888 4px); }
.controls { display: flex; align-items: flex-start; padding: 0 2px 0 6px; height: 57px; }
.grp { display: flex; height: 34px; border-radius: 4px; overflow: hidden; background: linear-gradient(#8f8f8f, #7e7e7e); border-bottom: 1px solid #686868; margin-top: 8px; flex: none; }
.grp button { width: 36px; border-left: 1px solid #717171; }
.grp button:first-child { border-left: 0; }
.grp button.wide { width: 44px; }
.grp button.on { background: #585858; }
.left1 { margin-right: 10px; }
.left2 { margin-right: 19px; }
.left3 { margin-right: auto; }
.grp .stack { flex-direction: column; font-size: 12px; line-height: 13px; font-weight: 500; color: #fff; justify-content: flex-start; padding-top: 5px; gap: 1px; }
.lcd { height: 49px; width: 688px; flex: none; background: #1a1f2b; border-radius: 3px; display: flex; color: #aed0e8; font-size: 19px; line-height: 23px; }
.cell { border-right: 1px solid #2c3d52; padding-top: 2px; white-space: nowrap; }
.cell s { text-decoration: none; color: #2b3240; }
.cell p { height: 23px; }
.time { width: 150px; padding-left: 5px; }
.pos { display: flex; gap: 9px; padding-left: 12px; }
.loc { width: 150px; padding-left: 18px; color: #4e6072; }
.loc p { display: flex; gap: 12px; }
.tempo { width: 101px; padding-left: 7px; }
.cell .small { font-size: 15px; }
.sig { width: 72px; text-align: center; }
.sig .r { text-align: right; padding-right: 14px; }
.io { width: 120px; padding-left: 8px; }
.load { width: 81px; font-size: 8px; color: #4a5d72; padding-left: 6px; padding-top: 1px; }
.load p { display: flex; align-items: center; gap: 7px; height: 24px; justify-content: space-between; padding-right: 7px; }
.load i { width: 45px; height: 4px; background: #28323f; }
.load b { display: block; width: 3px; height: 4px; background: #7f93a6; }
.more { flex: 1; }
.more svg { width: 10px; color: #bfe0f7; }
.modes { margin-left: 10px; }
.click { margin-left: 11px; }
.last { margin-left: 34px; }

.tools { height: 59px; background: linear-gradient(#949494, #8c8c8c); border-bottom: 1px solid #111; display: flex; padding-top: 11px; }
.sp { flex: 1 1 0; }
.tool { width: 58px; flex: none; display: flex; flex-direction: column; align-items: center; color: #1c1c1c; font-size: 10px; line-height: 14px; white-space: nowrap; }
.tool.dim { color: #4c4c4c; }
.tico { width: 24px; height: 22px; margin-bottom: 9px; }
.nudge { width: 139px; height: 19px; margin: 2px 0 10px; border: 1px solid #545454; border-radius: 3px; background: #747474; display: flex; color: #fff; font-size: 12px; font-weight: 600; line-height: 17px; }
.nudge span { flex: 1; text-align: center; border: solid #545454; border-width: 0 1px; }
.nudge button { width: 20px; }
.nudge svg { width: 12px; height: 12px; }

.work { flex: 1; display: flex; }
.inspector { width: 209px; flex: none; background: #616161; border-right: 1px solid #111; display: flex; flex-direction: column; }
.fold { height: 29px; background: #484848; border-bottom: 1px solid #1c1c1c; display: flex; align-items: center; color: #ccc; white-space: pre; }
.fold b { font-weight: 600; color: #fff; }
.tri { width: 0; height: 0; border: 5px solid transparent; border-left: 8px solid #ddd; border-right: 0; }
.fold .tri { margin: 0 6px 0 12px; }
.strips { flex: 1; display: flex; }
.strip { width: 105px; border-right: 1px solid #444; padding: 0 18px 0 17px; display: flex; flex-direction: column; justify-content: flex-end; font-size: 11px; font-weight: 500; }
.strip:last-child { border-right: 0; width: 104px; padding-right: 17px; }
.strip > * { flex: none; }
.bx { width: 100%; height: 18px; background: #565656; border: 1px solid #2d2d2d; border-radius: 3px; color: #fff; white-space: nowrap; }
.dark { color: #262626; margin-bottom: 5px; }
.thin { height: 6px; border-color: #474747; border-radius: 0; margin-bottom: 3px; background: #585858; }
.eq { height: 31px; border-color: #444; border-radius: 0; color: #222; margin-bottom: 5px; }
.faint { border-color: #4b4b4b; color: #2a2a2a; background: #595959; }
.row18 { height: 18px; }
.g8 { margin-bottom: 8px; } .g7 { margin-bottom: 7px; } .g5 { margin-bottom: 5px; } .g2 { margin-bottom: 2px; }
.blue { background: #216aa3; border-color: #12466e; }
.next { margin-top: -1px; }
.st { width: 15px; height: 14px; }
.fx { height: 43px; margin-bottom: 9px; }
.fx > .faint { height: 43px; }
.fx > .rest { height: 8px; }
.bus { display: flex; gap: 2px; }
.bus .bx { width: 50px; }
.mini { width: 18px; height: 18px; }
.sub { height: 8px; margin-bottom: 9px; }
.sub .bx { height: 8px; width: 50px; }
.flat { border-color: #484848; border-radius: 0; color: #222; margin-bottom: 5px; background: #585858; }
.read { color: #35e070; margin-bottom: 8px; }
.read.lit { background: #228a45; border-color: #165c2e; color: #fff; }
.pan { width: 36px; height: 34px; align-self: center; margin-bottom: 7px; }
.vals { display: flex; justify-content: space-between; margin-bottom: 21px; }
.vals span { width: 33px; height: 18px; background: #2d2d2d; color: #fff; text-align: center; line-height: 18px; white-space: nowrap; }
.vals .pk { color: #35e070; }
.fader { height: 137px; position: relative; margin-bottom: 5px; }
.fsvg text { font-size: 7px; fill: #bbb; font-weight: 500; }
.fader input { position: absolute; left: 7px; top: 0; width: 19px; height: 137px; margin: 0; appearance: none; writing-mode: vertical-lr; direction: rtl; background: linear-gradient(#262626, #262626) center / 2px 137px no-repeat; }
.fader input::-webkit-slider-thumb { appearance: none; width: 17px; height: 34px; border-radius: 1px; border: 1px solid #555; background: linear-gradient(#c0c0c0, #989898 10%, #b0b0b0 20%, #8c8c8c 47%, #333 48%, #333 51%, #c4c4c4 52%, #c0c0c0 80%, #9a9a9a); }
.bn { display: flex; justify-content: flex-end; }
.ms { display: flex; justify-content: space-between; margin-bottom: 9px; }
.half { width: 33px; }
.big { font-size: 12px; border-color: #333; }
.sname { text-align: center; height: 20px; line-height: 18px; white-space: nowrap; color: #fff; }

.arrange { flex: 1; min-width: 0; margin-left: 2px; border-left: 1px solid #111; display: flex; flex-direction: column; background: #2e2e2e; }
.amenu { height: 30px; background: #474747; border-bottom: 1px solid #1a1a1a; display: flex; align-items: center; padding: 0 4px 0 8px; font-weight: 600; }
.tb { height: 21px; width: 33px; flex: none; background: #3d3d3d; border: 1px solid #2a2a2a; border-radius: 4px; color: #fff; }
.tb svg { width: 17px; height: 15px; }
.tb svg.c { width: 9px; height: 9px; color: #999; }
.tb.up { background: #454545; margin-right: 8px; }
.seg { display: flex; flex: none; }
.seg .tb { border-radius: 0; border-left-width: 0; }
.seg .tb:first-child { border-radius: 4px 0 0 4px; border-left-width: 1px; }
.seg .tb:last-child { border-radius: 0 4px 4px 0; }
.m1 { margin-right: 8px; }
.tb.menu { width: 61px; gap: 11px; padding-left: 4px; }
.tb.two { width: 43px; gap: 8px; }
.tb.two svg:first-child { width: 13px; height: 14px; }
.tb.blueb { background: #216aa3; border-color: #174a72; }
.grow1 { flex: 460 1 0; }
.grow2 { flex: 84 1 0; }
.amenu label { color: #ddd; font-weight: 500; margin-right: 7px; white-space: nowrap; }
.pick { position: relative; height: 21px; flex: none; background: #3d3d3d; border: 1px solid #2a2a2a; border-radius: 4px; display: flex; align-items: center; padding-left: 10px; }
.pick svg { position: absolute; right: 5px; width: 13px; height: 13px; color: #aaa; pointer-events: none; }
.snap { width: 174px; margin-right: 10px; }
.drag { width: 142px; margin-right: 8px; }
.zooms { display: flex; background: #3b3b3b; border: 1px solid #2a2a2a; border-radius: 4px; height: 21px; width: 151px; flex: none; }
.zooms span { flex: 1; display: flex; align-items: center; gap: 5px; padding: 0 6px 0 4px; border-left: 1px solid #2a2a2a; }
.zooms span:first-child { border-left: 0; }
.zooms svg { width: 12px; height: 12px; }
.zooms input { appearance: none; margin: 0; width: 46px; height: 15px; background: linear-gradient(#222, #222) center / 100% 2px no-repeat; }
.zooms input::-webkit-slider-thumb { appearance: none; width: 10px; height: 13px; background: #aaa; border-radius: 5px 5px 2px 2px; }

.body { flex: 1; display: flex; min-height: 0; }
.heads { width: 249px; flex: none; background: #616161; border-right: 1px solid #0e0e0e; }
.hbar { height: 36px; background: #4f4f4f; border-bottom: 1px solid #111; display: flex; align-items: center; gap: 8px; padding: 0 8px 3px; }
.hbar .tb { background: #464646; border-color: #303030; }
.letter { font-size: 17px; font-weight: 400; line-height: 19px; }
.hbar .orange { background: #b9651b; border-color: #7c4310; }
.hbar .end { margin-left: auto; }
.track { height: 172px; border-bottom: 1px solid #484848; display: flex; }
.track.sel { background: #858585; }
.num { width: 21px; border-right: 1px solid #484848; text-align: center; padding-top: 79px; font-size: 12px; line-height: 16px; background: #616161; }
.sel .num { background: #787878; }
.info { padding: 53px 0 0 8px; flex: 1; }
.tname { font-size: 12px; line-height: 18px; height: 20px; color: #fff; white-space: nowrap; }
.trow { display: flex; align-items: center; height: 18px; }
.trow.two { margin-top: 9px; }
.sm { height: 18px; background: #525252; border: 1px solid #333; border-radius: 4px; color: #fff; font-size: 12px; width: 21px; }
.pw { background: #216aa3; border-color: #15466b; }
.pw svg { width: 12px; height: 12px; }
.pwgap { width: 21px; }
.pair { display: flex; margin-left: 6px; }
.pair .sm:first-child:not(:last-child) { border-radius: 4px 0 0 4px; }
.pair .sm:last-child:not(:first-child) { border-radius: 0 4px 4px 0; border-left: 0; width: 20px; }
.armed .sm { color: #f0333a; }
.sm.trk { background: #216aa3; border-color: #15466b; width: 63px; margin-left: auto; font-size: 11px; font-weight: 500; }
.led { width: 9px; height: 9px; border-radius: 50%; background: #363636; margin: 0 10px; }
.trow .tri { margin: 0 22px 0 2px; }
.sel1 { position: relative; width: 75px; height: 18px; border: 1px solid #363636; border-radius: 3px; background: #525252; color: #35e070; font-size: 11px; font-weight: 600; display: flex; align-items: center; padding-left: 7px; }
.sel1 svg { position: absolute; right: 2px; width: 10px; height: 11px; pointer-events: none; }
.sel1.lit { background: #228a45; border-color: #165c2e; color: #fff; }
.par { width: 96px; margin-left: 6px; font-weight: 500; font-size: 10px; }
.par.yel { color: #ecd85f; }

.timeline { flex: 1; min-width: 0; position: relative; background: #2e2e2e; overflow: hidden; }
.ruler { background: #343434; border-bottom: 1px solid #0c0c0c; overflow: hidden; }
.lanes { overflow: hidden; }
.rtext text { font-size: 12px; font-weight: 500; fill: #d4d4d4; }
.rtext text.sig { font-size: 9px; font-weight: 600; }
.rlabel { font-size: 10px; font-weight: 500; fill: #dcebf7; }
.mlabel { font-size: 11px; font-weight: 400; fill: #17753a; }
.alabel { font-size: 10px; font-weight: 700; fill: #f8e465; paint-order: stroke; stroke: rgba(30, 34, 30, .6); stroke-width: 1px; }
.playhead { position: absolute; left: 1064px; top: 17px; bottom: 0; width: 14px; background: linear-gradient(#fff, #fff) 6px 0 / 1px 100% no-repeat; }
.vbar { width: 11px; flex: none; background: #2b2b2b; border-left: 1px solid #0c0c0c; }
.hscroll { height: 13px; flex: none; background: #2b2b2b; border-top: 1px solid #0c0c0c; padding: 4px 0 0 252px; }
.hscroll i { display: block; width: 1134px; max-width: 80%; height: 7px; border-radius: 4px; background: #6b6b6b; }
</style>
